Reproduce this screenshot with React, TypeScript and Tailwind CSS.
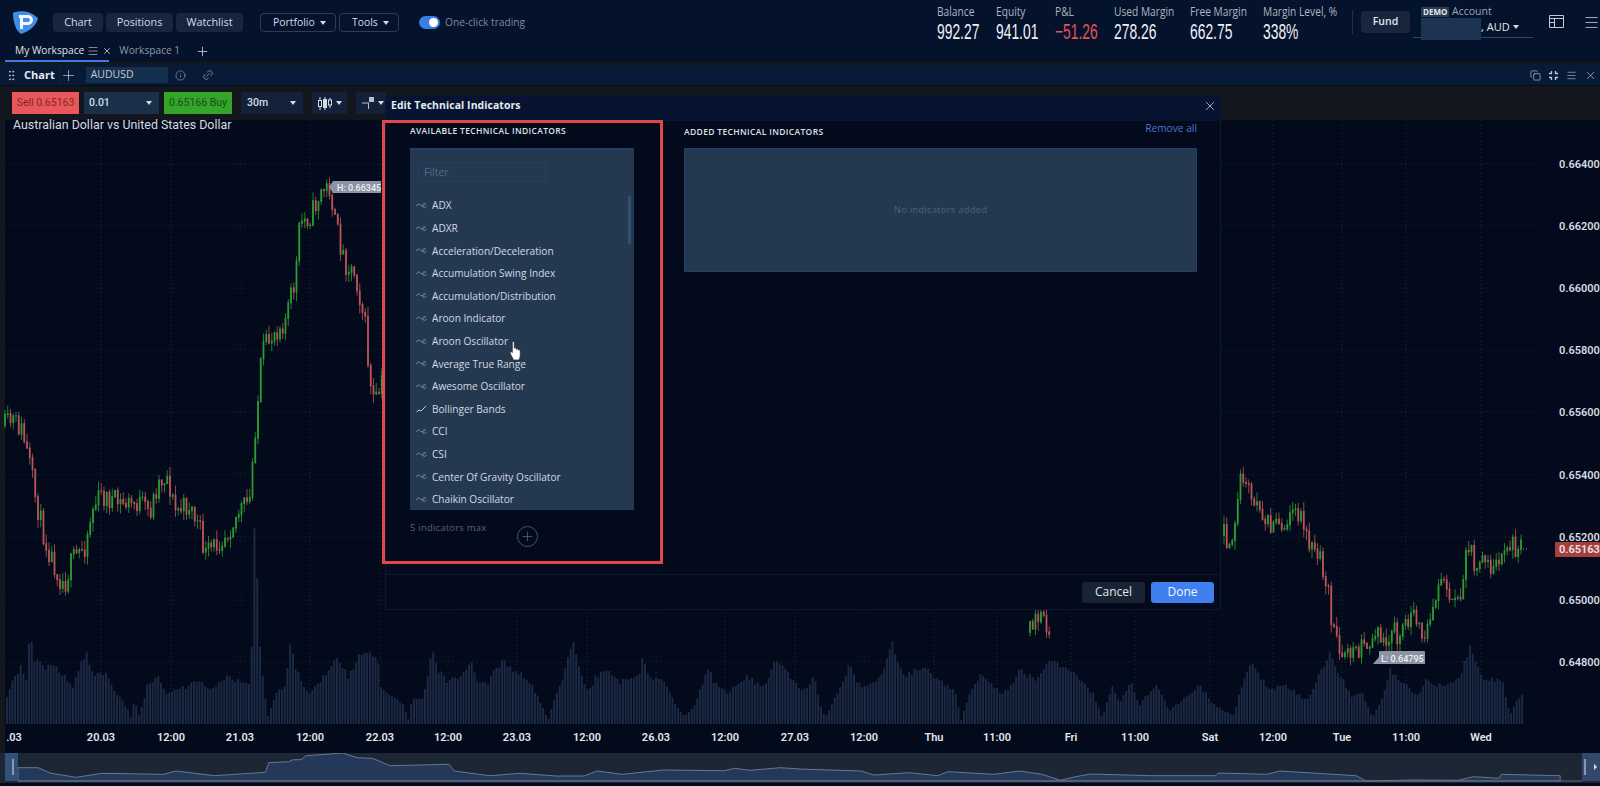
import React from "react";
import { Info, Link2, Plus, X, Menu, Copy, GripVertical } from "lucide-react";

type P = [number, number];
function interp(pts: P[], x: number) {
  for (let i = 0; i < pts.length - 1; i++) {
    const [a, b] = [pts[i], pts[i + 1]];
    if (x >= a[0] && x <= b[0]) return a[1] + ((b[1] - a[1]) * (x - a[0])) / (b[0] - a[0] || 1);
  }
  return pts[pts.length - 1][1];
}
function rng(seed: number) {
  let s = seed;
  return () => {
    s = (s * 16807) % 2147483647;
    return s / 2147483647;
  };
}
const leftPath: P[] = [[5,425],[13,420],[22,430],[30,465],[36,500],[45,540],[60,578],[65,583],[72,560],[85,545],[92,510],[100,495],[120,503],[140,503],[150,512],[158,482],[167,475],[175,510],[190,505],[200,530],[205,555],[215,545],[228,530],[240,510],[250,500],[254,440],[258,400],[262,352],[275,330],[285,320],[290,300],[295,282],[300,222],[310,216],[322,190],[330,187],[335,222],[345,262],[355,272],[365,322],[370,385],[375,405],[382,382]];
const midPath: P[] = [[1030,632],[1036,622],[1042,620],[1050,628]];
const rightPath: P[] = [[1224,535],[1232,540],[1240,480],[1250,492],[1258,505],[1270,528],[1282,522],[1295,515],[1305,522],[1312,548],[1320,558],[1328,590],[1332,622],[1340,650],[1350,652],[1365,645],[1380,636],[1395,630],[1400,642],[1410,610],[1420,636],[1430,630],[1437,582],[1445,576],[1450,590],[1460,600],[1468,540],[1475,562],[1490,566],[1505,552],[1517,545],[1523,553]];

function Candles({ path, seed }: { path: P[]; seed: number }) {
  const r = rng(seed);
  const out: React.ReactNode[] = [];
  const x0 = path[0][0];
  const x1 = path[path.length - 1][0];
  let prev = path[0][1];
  for (let x = x0; x <= x1; x += 2.75) {
    const base = interp(path, x);
    const close = base + (r() - 0.5) * 22;
    const top = Math.min(prev, close);
    const bot = Math.max(prev, close) + 1;
    const up = close < prev;
    const c = up ? "#2f9a32" : "#b9545a";
    out.push(
      <g key={x}>
        <line x1={x} x2={x} y1={top - r() * 9} y2={bot + r() * 9} stroke={c} strokeWidth={0.8} />
        <rect x={x - 0.9} y={top} width={1.8} height={bot - top} fill={c} />
      </g>
    );
    prev = close;
  }
  return <g>{out}</g>;
}

const volLeft: P[] = [[20,25],[30,43],[60,57],[75,42],[88,100],[95,63],[130,57],[165,58],[215,37],[245,69],[262,67],[275,50],[320,50],[335,37],[385,13],[392,3],[400,27],[415,7],[440,40],[470,47],[500,30],[600,43],[630,33],[680,48],[750,37],[757,165],[763,200],[772,113],[780,63],[800,7],[812,17],[825,30],[850,37],[868,78],[880,62],[900,43],[925,30],[980,52],[1005,72],[1040,47],[1075,67],[1095,75],[1130,63]];
const volMid: P[] = [[0,37],[50,19],[62,4],[70,26],[90,24],[100,36],[115,76],[125,56],[150,42],[190,51],[205,62],[215,44],[240,41],[255,57],[275,62],[290,56],[330,44],[355,24],[375,4],[395,34],[410,51],[430,86],[445,51],[465,31],[480,46],[505,56],[535,42],[580,49],[585,66],[600,46],[630,46],[650,27],[680,7],[700,17],[735,59],[745,42],[775,31],[820,47],[860,36],[880,61],[900,57],[945,32],[970,47],[985,17],[995,6],[1030,37],[1050,62],[1060,47],[1080,36],[1120,49],[1147,80],[1155,66],[1170,47],[1215,57],[1250,44],[1285,34],[1300,4],[1315,26],[1345,49]];
const volRight: P[] = [[0,31],[30,39],[50,53],[90,44],[133,64],[180,56],[240,31],[265,6],[290,38],[310,21],[340,41],[360,18],[405,39],[440,14],[490,29],[520,38],[560,18],[610,8],[622,31],[655,62],[700,34],[740,39],[800,24],[835,51],[862,71],[880,54],[915,28],[945,31],[970,6],[1000,29],[1015,54],[1050,41],[1090,28],[1110,44],[1150,38],[1200,48],[1226,78],[1260,44],[1310,44],[1330,8],[1345,23],[1365,29]];
const volEnv: P[] = [
  ...volLeft.map(([x, h]) => [x / 3, h] as P),
  ...volMid.map(([x, h]) => [380 + x / 2.24, h] as P),
  ...volRight.map(([x, h]) => [1000 + x / 2.613, h] as P).filter(([x]) => x > 981),
];
function Volume() {
  const r = rng(77);
  const bars: React.ReactNode[] = [];
  for (let x = 6; x <= 1523; x += 2.75) {
    const h = interp(volEnv, x) * (0.94 + r() * 0.12);
    bars.push(<rect key={x} x={x} y={724 - h} width={1.9} height={h} fill="#1c2b45" />);
  }
  return <g>{bars}</g>;
}

const hPrices: [number, string][] = [[164,"0.66400"],[226,"0.66200"],[288,"0.66000"],[350,"0.65800"],[412,"0.65600"],[475,"0.65400"],[537,"0.65200"],[600,"0.65000"],[662,"0.64800"]];
const times: [number, string][] = [[14,".03"],[101,"20.03"],[171,"12:00"],[240,"21.03"],[310,"12:00"],[380,"22.03"],[448,"12:00"],[517,"23.03"],[587,"12:00"],[656,"26.03"],[725,"12:00"],[795,"27.03"],[864,"12:00"],[934,"Thu"],[997,"11:00"],[1071,"Fri"],[1135,"11:00"],[1210,"Sat"],[1273,"12:00"],[1342,"Tue"],[1406,"11:00"],[1481,"Wed"]];

function ChartSvg() {
  return (
    <svg viewBox="0 120 1600 633" width={1600} height={633} className="block">
      <rect x={0} y={120} width={5} height={633} fill="#14171f" />
      {hPrices.map(([y]) => (
        <line key={y} x1={5} x2={1540} y1={y} y2={y} stroke="#1c2a3c" strokeDasharray="1 3" />
      ))}
      {times.slice(1).map(([x], i) => (
        <line key={i} x1={x} x2={x} y1={120} y2={723} stroke="#1c2a3c" strokeDasharray="1 3" />
      ))}
      <Volume />
      <Candles path={leftPath} seed={11} />
      <Candles path={midPath} seed={23} />
      <Candles path={rightPath} seed={37} />
      <line x1={1523} x2={1528} y1={549} y2={549} stroke="#8a93a3" strokeDasharray="1 2" />
      {hPrices.map(([y, t]) => (
        <text key={t} x={1559} y={y + 4} fontSize={11} fontWeight={600} fill="#d6dbe2" fontFamily="Roboto, sans-serif">{t}</text>
      ))}
      <rect x={1555} y={542} width={45} height={15} rx={1} fill="#a53f3f" />
      <text x={1559} y={553} fontSize={11} fontWeight={600} fill="#f0e4e4" fontFamily="Roboto, sans-serif">0.65163</text>
      {times.map(([x, t], i) => (
        <text key={i} x={x} y={741} textAnchor="middle" fontSize={11} fontWeight={600} fill="#e2e6ec" fontFamily="Roboto, sans-serif">{t}</text>
      ))}
      <path d="M333 181h48v12h-48l-4-6z" fill="#8c93a3" />
      <text x={337} y={191} fontSize={9} fontWeight={500} fill="#eef0f3" fontFamily="Roboto, sans-serif">H: 0.66345</text>
      <path d="M1373 664l6-7v-5a1 1 0 0 1 1-1h44a1 1 0 0 1 1 1v12z" fill="#8c93a3" />
      <text x={1381} y={662} fontSize={9} fontWeight={500} fill="#eef0f3" fontFamily="Roboto, sans-serif">L: 0.64795</text>
    </svg>
  );
}

const nav1: P[] = [[35,68],[75,68],[100,85],[150,97],[200,85],[320,88],[345,78],[420,92],[520,82],[527,53],[565,50],[575,44],[590,44],[600,32],[672,24],[700,38],[730,40],[765,62],[880,58],[890,78],[960,92],[1020,85],[1090,93],[1145,93],[1170,78],[1220,88],[1300,75],[1420,77],[1440,70],[1470,76],[1530,68],[1568,72]];
const nav2: P[] = [[0,72],[120,78],[145,90],[215,83],[270,92],[290,80],[380,88],[430,78],[475,88],[510,106],[540,95],[570,87],[690,92],[815,92],[820,84],[915,88],[940,78],[1090,92],[1110,108],[1200,105],[1290,106],[1320,95],[1370,100],[1375,88],[1490,92],[1490,108]];
const navPts = [
  ...nav1.map(([x, y]) => `${(x / 1.96).toFixed(1)},${(745 + y / 3).toFixed(1)}`),
  ...nav2.map(([x, y]) => `${(800 + x / 1.96).toFixed(1)},${(745 + y / 3).toFixed(1)}`),
  "18,781",
].join(" ");

function Navigator() {
  return (
    <div className="relative h-[30px] bg-[#1c2634]">
      <svg viewBox="0 753 1600 30" width={1600} height={30} className="block">
        <polygon points={navPts} fill="#24395a" stroke="#7b8a9e" strokeWidth={0.8} />
        <line x1={18} x2={1582} y1={781} y2={781} stroke="#5d6b80" />
        <rect x={5} y={753} width={13} height={28} fill="#33507a" />
        <line x1={13} x2={13} y1={759} y2={775} stroke="#dfe4ea" />
        <rect x={1582} y={753} width={18} height={28} fill="#33486a" />
        <line x1={1585} x2={1585} y1={759} y2={775} stroke="#dfe4ea" />
        <path d="M1594 764l3 3-3 3z" fill="#dfe4ea" />
      </svg>
    </div>
  );
}

function Stat({ label, value, red, w }: { label: string; value: string; red?: boolean; w: string }) {
  return (
    <div className={`flex flex-col ${w}`}>
      <span className="mt-[1px] origin-left scale-x-[0.85] whitespace-nowrap text-[12px] leading-[14px] text-[#aab4c2]">{label}</span>
      <span className={`mt-[1px] origin-left scale-x-[0.63] whitespace-nowrap font-['Liberation_Sans'] text-[22px] leading-[24px] ${red ? "text-[#e0555a]" : "text-[#eef1f5]"}`}>{value}</span>
    </div>
  );
}

function NavBtn({ children, w }: { children: React.ReactNode; w: string }) {
  return <div className={`flex h-[19px] items-center justify-center rounded-[4px] bg-[#17253f] text-[10.8px] text-[#d5dbe4] ${w}`}>{children}</div>;
}
function Drop({ children, w }: { children: React.ReactNode; w: string }) {
  return (
    <div className={`flex h-[19px] items-center justify-between rounded-[4px] border border-[#2b3d5a] pl-3 pr-[9px] text-[10.4px] text-[#d5dbe4] ${w}`}>
      {children}
      <Caret />
    </div>
  );
}
function Caret() {
  return <span className="h-0 w-0 border-x-[3px] border-t-[4px] border-x-transparent border-t-[#d5dbe4]" />;
}

function Wave({ check }: { check?: boolean }) {
  return (
    <svg width={11} height={8} viewBox="0 0 11 8" className="shrink-0" fill="none" stroke={check ? "#c4ccd6" : "#7f8ea1"} strokeWidth={1}>
      {check ? <path d="M0.5 7L3 5L5 6L10 1" /> : <path d="M0.5 4C2 1 3 2 4.5 3S7 4.5 7.5 3M6.5 3C7 5 8 7 10.500 4M7 2h3" />}
    </svg>
  );
}

function HandCursor() {
  return (
    <svg width={13} height={20} viewBox="0 0 11 19" className="absolute left-[509px] top-[341px]" fill="#fff" stroke="#222" strokeWidth={0.6}>
      <path d="M2.500 1.200C2.500.3 4.300.3 4.300 1.200V7C4.500 5.800 6 5.800 6.200 7V8C6.400 7 7.900 7 8.100 8V8.800C8.300 8 9.800 8.200 10 9V13C10 15 9.500 16 8.800 18H3.500C3 16 1 13.500.5 11.500C.2 10.500 1.300 9.800 2 10.500L2.500 11Z" />
    </svg>
  );
}

const indicators = ["ADX","ADXR","Acceleration/Deceleration","Accumulation Swing Index","Accumulation/Distribution","Aroon Indicator","Aroon Oscillator","Average True Range","Awesome Oscillator","Bollinger Bands","CCI","CSI","Center Of Gravity Oscillator","Chaikin Oscillator"];

function Modal() {
  return (
    <div className="absolute left-[385px] top-[95px] flex h-[515px] w-[836px] flex-col border border-[#0d1a2e] bg-[#030a1b]">
      <div className="flex h-[25px] items-center justify-between bg-[#061431] pb-[5px] pl-[5px] pr-[3px]">
        <span className="text-[10.4px] font-bold tracking-[0.1px] text-[#e8ecf1]">Edit Technical Indicators</span>
        <X size={14} strokeWidth={1.3} className="text-[#dfe4ea]" />
      </div>
      <div className="flex flex-1">
        <div className="ml-[24px] flex w-[224px] flex-col">
          <div className="mt-[4px] h-[23px] whitespace-nowrap text-[8.5px] font-semibold leading-[12px] tracking-[0.35px] text-[#dde2e9]">AVAILABLE TECHNICAL INDICATORS</div>
          <div className="flex h-[362px] flex-col overflow-hidden border-b border-[#1d4168] bg-[#243850] [border-top:2px_solid_#1d4168]">
            <div className="ml-2 mt-3 flex h-[22px] w-[128px] items-center border border-[#1d4168] pl-[5px] pt-[2px] text-[10.5px] text-[#5c6c80]">Filter</div>
            <div className="relative mt-[6px] pt-[7px]">
              <div className="absolute right-[3px] top-[8px] h-[48px] w-[3px] bg-[#33506f]" />
              {indicators.map((n) => (
                <div key={n} className="flex h-[22.6px] items-center gap-[5px] pl-[6px] text-[10.1px] text-[#d2d9e2]">
                  <Wave check={n === "Bollinger Bands"} />
                  <span className="whitespace-nowrap">{n}</span>
                </div>
              ))}
            </div>
          </div>
          <div className="relative mt-[11px] flex items-start justify-between pr-[5px]">
            <span className="text-[9.5px] tracking-[0.2px] text-[#566577]">5 indicators max</span>
            <div className="mr-[91px] mt-[5px] flex h-[21px] w-[21px] items-center justify-center rounded-full border border-[#46566a]">
              <Plus size={15} strokeWidth={1} className="text-[#6a798b]" />
            </div>
          </div>
        </div>
        <div className="ml-[50px] flex w-[513px] flex-col">
          <div className="flex h-[27px] items-start justify-between">
            <span className="mt-[5px] text-[8.5px] font-semibold leading-[12px] tracking-[0.35px] text-[#dde2e9]">ADDED TECHNICAL INDICATORS</span>
            <span className="text-[10.2px] leading-[14px] text-[#4678d2]">Remove all</span>
          </div>
          <div className="flex h-[124px] items-center justify-center border border-[#1d4168] bg-[#243850] pt-[1px] text-[9.5px] tracking-[0.2px] text-[#50617a]">No indicators added</div>
        </div>
      </div>
      <div className="flex h-[35px] items-center justify-end gap-[6px] border-t border-[#0d1a2e] pr-[6px]">
        <div className="flex h-[21px] w-[63px] items-center justify-center rounded-[3px] bg-[#182433] text-[12px] text-[#dfe4ea]">Cancel</div>
        <div className="flex h-[21px] w-[63px] items-center justify-center rounded-[3px] bg-[#3f7ff0] text-[12px] text-[#f2f6fc]">Done</div>
      </div>
    </div>
  );
}

function Logo() {
  return (
    <svg width={27} height={24} viewBox="0 0 27 24">
      <path d="M1 3C6 0 18 0 26 8C25 15 18 21 9 24C4 21 1 12 1 3Z" fill="#3f8eea" />
      <path d="M7 5h9a5 5 0 0 1 0 10h-5v4H8V8h3v4h5a2 2 0 0 0 0-4H7z" fill="#f3f8fe" />
    </svg>
  );
}

export default function App() {
  return (
    <div className="relative h-[786px] w-[1600px] overflow-hidden bg-[#030a1b] font-['Open_Sans',sans-serif]">
      {/* top bar */}
      <div className="relative flex h-[40px] items-start bg-[#05122b] pl-3">
        <div className="mt-[10px]"><Logo /></div>
        <div className="ml-[14px] mt-[13px] flex gap-[3px]">
          <NavBtn w="w-[50px]">Chart</NavBtn>
          <NavBtn w="w-[67px]">Positions</NavBtn>
          <NavBtn w="w-[67px]">Watchlist</NavBtn>
        </div>
        <div className="ml-[17px] mt-[13px] flex gap-[3px]">
          <Drop w="w-[76px]">Portfolio</Drop>
          <Drop w="w-[60px]">Tools</Drop>
        </div>
        <div className="ml-[20px] mt-[16px] flex items-center gap-[5px]">
          <div className="relative h-[13px] w-[21px] rounded-full bg-[#3b7de8]">
            <div className="absolute right-[2px] top-[2px] h-[9px] w-[9px] rounded-full bg-white" />
          </div>
          <span className="text-[10.2px] leading-[13px] text-[#7d8a9c]">One-click trading</span>
        </div>
        <div className="ml-auto flex items-start">
          <div className="mt-[4px] flex">
            <Stat label="Balance" value="992.27" w="w-[59px]" />
            <Stat label="Equity" value="941.01" w="w-[59px]" />
            <Stat label="P&L" value="−51.26" red w="w-[59px]" />
            <Stat label="Used Margin" value="278.26" w="w-[76px]" />
            <Stat label="Free Margin" value="662.75" w="w-[73px]" />
            <Stat label="Margin Level, %" value="338%" w="w-[89px]" />
          </div>
          <div className="mt-[10px] h-[24px] w-px bg-[#1e2e47]" />
          <div className="ml-[8px] mt-[11px] flex h-[22px] w-[49px] items-center justify-center rounded-[4px] bg-[#17253f] text-[10.5px] font-semibold text-[#e3e7ed]">Fund</div>
          <div className="relative ml-[3px] mt-[2px] h-[36px] w-[120px] border-b border-[#33465f]">
            <span className="absolute left-[8px] top-[5px] bg-[#2a3a52] px-[2px] text-[8px] font-bold leading-[10px] text-[#e3e7ed]">DEMO</span>
            <span className="absolute left-[39px] top-[2px] text-[10.5px] text-[#9aa5b4]">Account</span>
            <div className="absolute left-[8px] top-[16px] h-[23px] w-[60px] bg-[#1c3352]" />
            <span className="absolute left-[68px] top-[17px] flex items-center gap-[3px] text-[11px] text-[#e3e7ed]">, AUD <Caret /></span>
          </div>
          <svg width={15} height={13} viewBox="0 0 15 13" className="ml-[16px] mt-[15px]" fill="none" stroke="#c3cad4"><path d="M.5.5h14v12H.5zM.5 3.500h14M5.500 3.500v9M.5 7.500h5" /></svg>
          <Menu size={17} strokeWidth={1.3} className="ml-[19px] mt-[14px] text-[#aeb7c4]" />
        </div>
      </div>
      {/* tabs */}
      <div className="relative flex h-[22px] items-center bg-[#05122b] pl-[15px] text-[10.2px]">
        <span className="text-[#dfe4ea]">My Workspace</span>
        <Menu size={12} strokeWidth={1.3} className="ml-[3px] text-[#c3cad4]" />
        <X size={10} className="ml-[3px] text-[#c3cad4]" />
        <span className="ml-[7px] text-[#8d99a9]">Workspace 1</span>
        <Plus size={15} strokeWidth={1.2} className="ml-[15px] text-[#dfe4ea]" />
        <div className="absolute bottom-0 left-[5px] h-[2px] w-[104px] bg-[#3b7de8]" />
      </div>
      <div className="h-[3px] bg-[#14171f]" />
      {/* chart header */}
      <div className="relative flex h-[20px] items-center bg-[#071a38] pl-[5px] pr-[3px]">
        <GripVertical size={13} strokeWidth={1.6} className="text-[#c3cad4]" />
        <span className="ml-[6px] text-[11px] font-bold text-[#e8ecf1]">Chart</span>
        <div className="ml-[5px] h-full w-px bg-[#0d2340]" />
        <Plus size={17} strokeWidth={1} className="-ml-[1px] text-[#c3cad4]" />
        <div className="ml-[9px] flex h-[16px] w-[82px] items-center bg-[#15304f] pl-[5px] text-[10.5px] text-[#c3cad4]">AUDUSD</div>
        <Info size={11} strokeWidth={1.2} className="ml-[7px] text-[#aeb7c4]" />
        <Link2 size={12} strokeWidth={1.2} className="ml-[16px] -rotate-45 text-[#aeb7c4]" />
        <div className="ml-auto flex items-center gap-[7px] text-[#c3cad4]">
          <Copy size={11} strokeWidth={1.4} />
          <svg width={11} height={11} viewBox="0 0 11 11" fill="none" stroke="#c3cad4" strokeWidth={1.3}>
            <path d="M1 3.500h2.500V1M7.500 1v2.500H10M1 7.500h2.500V10M7.500 10V7.500H10" />
          </svg>
          <Menu size={11} strokeWidth={1.3} />
          <X size={13} strokeWidth={1.2} />
        </div>
      </div>
      <div className="h-px bg-[#030a1b]" />
      {/* toolbar */}
      <div className="flex h-[34px] items-center bg-[#14161d] pl-[12px] font-['Roboto',sans-serif]">
        <div className="flex h-[22px] w-[67px] items-center justify-center bg-[#e8585a] text-[10.5px] text-[#8c2226]">Sell 0.65163</div>
        <div className="ml-[5px] flex h-[22px] w-[75px] items-center justify-between bg-[#1a3049] pl-[5px] pr-[7px] text-[10.5px] font-medium text-[#d5dbe4]">0.01<Caret /></div>
        <div className="ml-[5px] flex h-[22px] w-[68px] items-center justify-center bg-[#35a52a] text-[10.5px] text-[#14501a]">0.65166 Buy</div>
        <div className="ml-[9px] flex h-[22px] w-[62px] items-center justify-between bg-[#14213a] pl-[6px] pr-[7px] text-[10.5px] font-medium text-[#d5dbe4]">30m<Caret /></div>
        <div className="ml-[9px] flex h-[22px] w-[35px] items-center justify-center gap-[3px] bg-[#14213a]">
          <svg width={15} height={13} viewBox="0 0 15 13" fill="none" stroke="#d5dbe4" strokeWidth={1}>
            <path d="M2 0v13M7 0v13M12 1v10" />
            <rect x={0.5} y={3.500} width={3} height={6} fill="#14213a" />
            <rect x={5.500} y={2.500} width={3} height={8} fill="#d5dbe4" />
            <rect x={10.500} y={3} width={3} height={5} fill="#14213a" />
          </svg>
          <Caret />
        </div>
        <div className="ml-[9px] flex h-[22px] w-[30px] items-center gap-[3px] bg-[#14213a] pl-[6px]">
          <svg width={13} height={12} viewBox="0 0 13 12" fill="none" stroke="#b8c0cc">
            <path d="M0 6h7M6.500 6v6" />
            <rect x={7.500} y={0.500} width={4} height={4} fill="#b8c0cc" />
          </svg>
          <Caret />
        </div>
      </div>
      {/* chart */}
      <div className="relative">
        <ChartSvg />
        <div className="absolute left-[13px] top-[-3px] font-['Roboto',sans-serif] text-[12.4px] leading-[16px] text-[#d6dbe2]">Australian Dollar vs United States Dollar</div>
      </div>
      <Navigator />
      <Modal />
      {/* annotation */}
      <div className="pointer-events-none absolute left-[382px] top-[120px] h-[444px] w-[281px] border-[3px] border-[#e3474c]" />
      <HandCursor />
    </div>
  );
}
